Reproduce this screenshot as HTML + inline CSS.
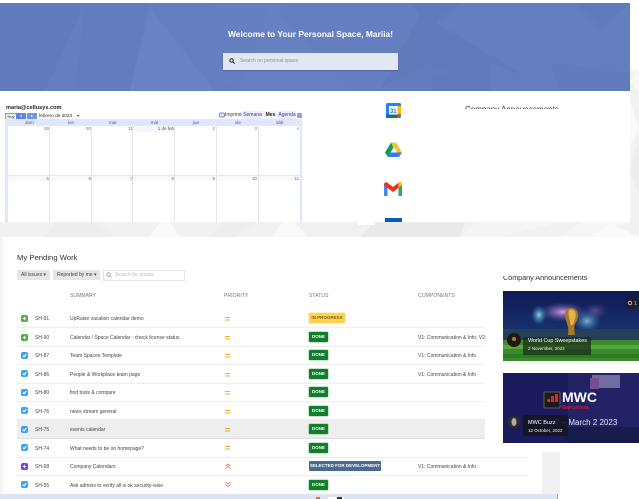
<!DOCTYPE html>
<html><head><meta charset="utf-8">
<style>
html,body{margin:0;padding:0;background:#fff}
body{width:639px;height:499px;position:relative;overflow:hidden;font-family:"Liberation Sans",sans-serif;color:#333}
.a{position:absolute;white-space:nowrap}
.t{font-size:5px;line-height:8px;color:#444}
.h{font-size:5px;line-height:8px;color:#777;letter-spacing:.1px}
.i{position:absolute;left:21px;width:7px;height:7px;border-radius:2px}
.sep{position:absolute;left:17px;height:1px;background:#eeeeee}
.b{position:absolute;left:309px;height:10px;font-size:4.5px;font-weight:bold;line-height:10px;text-align:center;border-radius:1px;color:#fff;background:#0f7f2c;width:19px;box-shadow:0 0 0 .5px #8cc79a}
.d{position:absolute;font-size:4.5px;line-height:6px;color:#777;text-align:right;width:20px}
.p{position:absolute;left:225px;width:5px;height:1px;background:#f6ab1d;box-shadow:0 2.5px 0 #f6ab1d}
</style></head><body>
<!-- page grey bg -->
<svg class="a" style="left:630px;top:70px" width="9" height="152" viewBox="0 0 9 152">
<rect width="9" height="152" fill="#f2f2f2"/>
<polygon points="9,0 0,12 9,22" fill="#f8f8f8"/>
<polygon points="0,30 9,60 0,75" fill="#fafafa"/>
<polygon points="9,70 0,100 9,125" fill="#ededed"/>
</svg>
<!-- banner -->
<svg class="a" style="left:0;top:3px" width="630" height="88" viewBox="0 0 630 88">
<rect width="630" height="88" fill="#657ec0"/>
<polygon points="0,0 85,0 45,88 0,88" fill="#627bbd"/>
<polygon points="150,5 215,88 130,88" fill="#6882c3"/>
<polygon points="85,0 148,0 130,88 75,88" fill="#637cbe"/>
<polygon points="215,0 285,0 240,88 215,75" fill="#657fc1"/>
<polygon points="270,0 350,88 240,88" fill="#6780c2"/>
<polygon points="420,10 520,70 480,88 380,88" fill="#617abc"/>
<polygon points="375,88 430,60 480,88" fill="#637cbe"/>
<polygon points="410,0 460,0 430,25" fill="#607abb"/>
<polygon points="430,75 500,58 520,88 435,88" fill="#607abb"/>
<polygon points="490,60 560,88 490,88" fill="#657ec0"/>
<polygon points="550,60 630,70 630,88 560,88" fill="#617bbc"/>
<polygon points="575,0 630,0 600,25" fill="#607abb"/>
</svg>
<div class="a" style="left:228px;top:28px;font-size:8.45px;line-height:12px;font-weight:bold;color:#fff">Welcome to Your Personal Space, Mariia!</div>
<div class="a" style="left:223px;top:53px;width:175px;height:17px;background:#e3e6f3;box-shadow:0 1px 1px rgba(40,50,100,.35)"></div>
<svg class="a" style="left:229px;top:58px" width="6" height="6" viewBox="0 0 6 6"><circle cx="2.5" cy="2.5" r="1.7" fill="none" stroke="#223" stroke-width="1"/><path d="M4 4L5.6 5.6" stroke="#223" stroke-width="1"/></svg>
<div class="a" style="left:240px;top:58px;font-size:5px;line-height:7px;color:#8d8f9c">Search on personal space</div>

<!-- calendar -->
<div class="a" style="left:6px;top:104px;font-size:5.6px;line-height:8px;font-weight:bold;color:#222">maria@cellusys.com</div>
<div class="a" style="left:5px;top:113px;width:10px;height:5px;border:.5px solid #999;background:#eee;font-size:4px;line-height:5px;text-align:center">Hoy</div>
<div class="a" style="left:16px;top:113px;width:10px;height:6px;background:#5d84ea"></div>
<div class="a" style="left:27px;top:113px;width:10px;height:6px;background:#6f93ee"></div>
<div class="a" style="left:20px;top:114.5px;width:0;height:0;border:1.5px solid transparent;border-right:2px solid #fff;border-left:0"></div>
<div class="a" style="left:31px;top:114.5px;width:0;height:0;border:1.5px solid transparent;border-left:2px solid #fff;border-right:0"></div>
<div class="a" style="left:39px;top:112px;font-size:4.7px;line-height:7px;color:#222">febrero de 2023</div>
<div class="a" style="left:77px;top:115px;width:0;height:0;border:1.5px solid transparent;border-top:2px solid #333"></div>
<svg class="a" style="left:219px;top:112px" width="6" height="6"><rect x=".5" y="1" width="5" height="4" rx="1" fill="#dfe5fb" stroke="#5566bb" stroke-width=".7"/></svg>
<div class="a" style="left:225px;top:112px;font-size:5px;line-height:7px;color:#444">Imprimir</div>
<div class="a" style="left:242px;top:111px;width:21px;height:8px;background:#e9edfd;font-size:5px;line-height:9px;text-align:center;color:#3a3ab0">Semana</div>
<div class="a" style="left:264px;top:111px;width:13px;height:8px;background:#f6f6f6;font-size:5px;font-weight:bold;line-height:9px;text-align:center;color:#222">Mes</div>
<div class="a" style="left:278px;top:111px;width:18px;height:8px;background:#e9edfd;font-size:5px;line-height:9px;text-align:center;color:#3a3ab0">Agenda</div>
<div class="a" style="left:297px;top:113px;width:5px;height:5px;background:#8aa4f0"></div>
<div class="a" style="left:5px;top:119px;width:297px;height:103px;background:#e0e6ff"></div>
<div class="a" style="left:8px;top:126px;width:292px;height:96px;background:#fff"></div>
<div class="a" style="left:133px;top:127px;width:42px;height:5px;background:#f5f6fd"></div>
<div class="a" style="left:8px;top:175px;width:292px;height:1px;background:#e6e6ea"></div>
<div class="a" style="left:8px;top:176px;width:292px;height:5px;background:#f7f8fc"></div>
<div class="a" style="left:49px;top:126px;width:1px;height:96px;background:#e6e6ea"></div>
<div class="a" style="left:91px;top:126px;width:1px;height:96px;background:#e6e6ea"></div>
<div class="a" style="left:132px;top:126px;width:1px;height:96px;background:#e6e6ea"></div>
<div class="a" style="left:174px;top:126px;width:1px;height:96px;background:#e6e6ea"></div>
<div class="a" style="left:216px;top:126px;width:1px;height:96px;background:#e6e6ea"></div>
<div class="a" style="left:258px;top:126px;width:1px;height:96px;background:#e6e6ea"></div>
<div class="a" style="left:8px;top:120px;width:292px;height:6px;font-size:4.5px;line-height:6px;color:#4a4ac0">
<span class="a" style="left:17px">dom</span><span class="a" style="left:60px">lun</span><span class="a" style="left:101px">mar</span><span class="a" style="left:143px">mié</span><span class="a" style="left:185px">jue</span><span class="a" style="left:227px">vie</span><span class="a" style="left:268px">sáb</span></div>
<div class="d" style="left:29px;top:126px">29</div><div class="d" style="left:71px;top:126px">30</div><div class="d" style="left:113px;top:126px">31</div><div class="d" style="left:154px;top:126px;width:20px;color:#555">1 de feb</div><div class="d" style="left:195px;top:126px">2</div><div class="d" style="left:237px;top:126px">3</div><div class="d" style="left:279px;top:126px">4</div>
<div class="d" style="left:29px;top:176px">5</div><div class="d" style="left:71px;top:176px">6</div><div class="d" style="left:113px;top:176px">7</div><div class="d" style="left:154px;top:176px">8</div><div class="d" style="left:195px;top:176px">9</div><div class="d" style="left:237px;top:176px">10</div><div class="d" style="left:279px;top:176px">11</div>

<!-- app icons -->
<svg class="a" style="left:386px;top:103px" width="15" height="15" viewBox="0 0 15 15"><rect width="15" height="15" rx="1.5" fill="#1e88e5"/><rect x="11" y="3" width="4" height="9" fill="#fbbc04"/><rect y="11" width="12" height="4" fill="#188038"/><rect y="11" width="3" height="4" fill="#1967d2"/><polygon points="11,15 15,11 11,11" fill="#ea4335"/><rect x="3" y="3" width="8.5" height="8.5" fill="#fff"/><text x="7.3" y="10" font-size="6" font-weight="bold" text-anchor="middle" fill="#1a73e8" font-family="Liberation Sans">31</text></svg>
<svg class="a" style="left:385px;top:142px" width="17" height="16" viewBox="0 0 17 16"><polygon points="6,0.5 11,0.5 17,10.5 12,10.500" fill="#fbc02d"/><polygon points="3,15 14,15 17,10.500 5.500,10.500" fill="#3b7bf0"/><polygon points="6,0.500 8.500,5.500 3,15 0,10.500" fill="#0f9d58"/></svg>
<svg class="a" style="left:384px;top:182px" width="18" height="14" viewBox="0 0 18 14"><path d="M0 3v11h3.500V5z" fill="#4285f4"/><path d="M18 3v11h-3.500V5z" fill="#34a853"/><path d="M0 2.500C0 .5 2 -.5 3.500 .8L9 5l5.500-4.200C16 -.5 18 .5 18 2.500v.5l-3.500 3L9 10 3.500 6 0 3z" fill="#ea3323"/><path d="M14.500 .8C16 -.5 18 .5 18 2.500V3l-3.500 3z" fill="#fbbc04"/></svg>
<div class="a" style="left:385px;top:218px;width:17px;height:5px;background:#0d5ab8"></div>
<div class="a" style="left:465px;top:105px;height:4px;overflow:hidden;width:100px"><div style="font-size:8px;line-height:10px;color:#333;white-space:nowrap">Company Announcements</div></div>

<!-- grey strip -->
<svg class="a" style="left:0;top:222px" width="639" height="15" viewBox="0 0 639 15">
<rect width="639" height="15" fill="#f1f1f1"/>
<polygon points="45,15 55,0 95,0 115,15" fill="#ededed"/>
<polygon points="150,15 160,0 170,0 180,15" fill="#fafafa"/>
<polygon points="210,15 225,0 255,0 235,15" fill="#ededed"/>
<polygon points="272,15 282,0 295,0 308,15" fill="#f9f9f9"/>
<polygon points="360,15 375,0 465,0 460,15" fill="#e9e9e9"/>
<polygon points="460,15 475,0 560,0 500,15" fill="#f5f5f5"/>
<polygon points="560,15 580,0 630,0 590,15" fill="#f6f6f6"/>
<polygon points="590,15 610,2 639,15" fill="#fafafa"/>
<rect x="358" y="0" width="17" height="3" fill="#fff"/>
</svg>

<!-- lower panel -->
<div class="a" style="left:3px;top:237px;width:636px;height:262px;background:#fff"></div>
<div class="a" style="left:0;top:237px;width:3px;height:262px;background:#f5f5f5"></div>
<div class="a" style="left:17px;top:252px;font-size:7.7px;line-height:11px;color:#333">My Pending Work</div>
<div class="a" style="left:17px;top:270px;width:33px;height:10px;background:#e6e6e6;border-radius:1px;font-size:5px;line-height:10px;color:#444;text-indent:4px">All issues ▾</div>
<div class="a" style="left:53px;top:270px;width:47px;height:10px;background:#e6e6e6;border-radius:1px;font-size:5px;line-height:10px;color:#444;text-indent:4px">Reported by me ▾</div>
<div class="a" style="left:103px;top:270px;width:80px;height:9px;border:1px solid #e3e3e3;border-radius:1px;font-size:5px;line-height:9px;color:#bbb;text-indent:11px">Search for Issues</div>
<svg class="a" style="left:106px;top:272px" width="6" height="6"><circle cx="2.500" cy="2.500" r="1.700" fill="none" stroke="#999" stroke-width=".8"/><path d="M4 4L5.500 5.500" stroke="#999" stroke-width=".8"/></svg>

<div class="a h" style="left:70px;top:292px">SUMMARY</div>
<div class="a h" style="left:224px;top:292px">PRIORITY</div>
<div class="a h" style="left:309px;top:292px">STATUS</div>
<div class="a h" style="left:418px;top:292px">COMPONENTS</div>

<div class="a" style="left:17px;top:420px;width:468px;height:18px;background:#eeeeee"></div>
<div class="sep" style="top:327px;width:468px"></div><div class="sep" style="top:346px;width:468px"></div><div class="sep" style="top:364px;width:468px"></div><div class="sep" style="top:383px;width:468px"></div><div class="sep" style="top:401px;width:468px"></div><div class="sep" style="top:419px;width:468px"></div><div class="sep" style="top:438px;width:468px;background:#ddd"></div><div class="sep" style="top:457px;width:510px"></div><div class="sep" style="top:475px;width:510px"></div>

<!-- row icons -->
<div class="i" style="top:315px;background:#4caf3f"></div><div class="i" style="top:334px;background:#4caf3f"></div>
<div class="i" style="top:352px;background:#3ea2ee"></div><div class="i" style="top:370px;background:#3ea2ee"></div><div class="i" style="top:389px;background:#3ea2ee"></div><div class="i" style="top:407px;background:#3ea2ee"></div><div class="i" style="top:426px;background:#3ea2ee"></div><div class="i" style="top:444px;background:#3ea2ee"></div>
<div class="i" style="top:463px;background:#7b3fe0"></div><div class="i" style="top:481px;background:#3ea2ee"></div>
<svg class="a" style="left:21px;top:315px" width="7" height="175" viewBox="0 0 7 175" fill="none" stroke="#fff" stroke-width="1.100"><path d="M3.500 1.800v3.400M1.800 3.500h3.400M3.500 20.800v3.400M1.800 22.500h3.400M3.500 149.800v3.400M1.800 151.500h3.400"/><path d="M1.800 40.500l1.300 1.300 2.200-2.700M1.800 58.500l1.300 1.300 2.200-2.700M1.800 77.500l1.300 1.300 2.200-2.700M1.800 95.500l1.300 1.300 2.200-2.700M1.800 114.500l1.300 1.300 2.200-2.700M1.800 132.500l1.300 1.300 2.200-2.700M1.800 169.500l1.300 1.300 2.200-2.700"/></svg>

<div class="a t" style="left:35px;top:315px">SH-91</div><div class="a t" style="left:70px;top:315px">UpRaise vacation calendar demo</div><div class="p" style="top:317px"></div>
<div class="a t" style="left:35px;top:334px">SH-90</div><div class="a t" style="left:70px;top:334px">Calendar / Space Calendar - check license status</div><div class="p" style="top:336px"></div>
<div class="a t" style="left:35px;top:352px">SH-87</div><div class="a t" style="left:70px;top:352px">Team Spaces Template</div><div class="p" style="top:354px"></div>
<div class="a t" style="left:35px;top:371px">SH-86</div><div class="a t" style="left:70px;top:371px">People &amp; Workplace team page</div><div class="p" style="top:373px"></div>
<div class="a t" style="left:35px;top:389px">SH-80</div><div class="a t" style="left:70px;top:389px">find tools &amp; compare</div><div class="p" style="top:391px"></div>
<div class="a t" style="left:35px;top:408px">SH-76</div><div class="a t" style="left:70px;top:408px">news stream general</div><div class="p" style="top:410px"></div>
<div class="a t" style="left:35px;top:426px">SH-75</div><div class="a t" style="left:70px;top:426px">events calendar</div><div class="p" style="top:428px"></div>
<div class="a t" style="left:35px;top:445px">SH-74</div><div class="a t" style="left:70px;top:445px">What needs to be on homepage?</div><div class="p" style="top:446px"></div>
<div class="a t" style="left:35px;top:463px">SH-68</div><div class="a t" style="left:70px;top:463px">Company Calendars</div>
<div class="a t" style="left:35px;top:482px">SH-55</div><div class="a t" style="left:70px;top:482px">Ask admins to verify all is ok security-wise</div>
<svg class="a" style="left:225px;top:463px" width="6" height="6" viewBox="0 0 6 6" fill="none" stroke="#f15b3b" stroke-width=".8"><path d="M.5 3L3 1l2.500 2M.5 5.500L3 3.500l2.500 2"/></svg>
<svg class="a" style="left:225px;top:481px" width="6" height="6" viewBox="0 0 6 6" fill="none" stroke="#f15b3b" stroke-width=".8"><path d="M.5 1L3 3l2.500-2M.5 3.500L3 5.500l2.500-2"/></svg>

<div class="b" style="top:313px;width:36px;background:#ffd24d;color:#7a6420;box-shadow:0 0 0 .5px #ffe596">IN PROGRESS</div>
<div class="b" style="top:332px">DONE</div><div class="b" style="top:350px">DONE</div><div class="b" style="top:369px">DONE</div><div class="b" style="top:387px">DONE</div><div class="b" style="top:406px">DONE</div><div class="b" style="top:424px">DONE</div><div class="b" style="top:443px">DONE</div>
<div class="b" style="top:461px;width:72px;background:#4a6a90;box-shadow:none">SELECTED FOR DEVELOPMENT</div>
<div class="b" style="top:480px">DONE</div>

<div class="a t" style="left:418px;top:334px;width:68px;overflow:hidden">V1: Communication &amp; Info, V2:</div>
<div class="a t" style="left:418px;top:352px">V1: Communication &amp; Info</div>
<div class="a t" style="left:418px;top:371px">V1: Communication &amp; Info</div>
<div class="a t" style="left:418px;top:463px">V1: Communication &amp; Info</div>

<!-- right column -->
<div class="a" style="left:503px;top:276px;height:6px;overflow:hidden;width:100px"><div style="margin-top:-2px;font-size:7.2px;line-height:8px;color:#333;white-space:nowrap">Company Announcements</div></div>
<svg class="a" style="left:503px;top:291px" width="136" height="70" viewBox="0 0 136 70">
<defs><linearGradient id="sky" x1="0" x2="0" y1="0" y2="1"><stop offset="0" stop-color="#0f1a55"/><stop offset=".55" stop-color="#16306c"/><stop offset="1" stop-color="#0f2a52"/></linearGradient>
<radialGradient id="fw"><stop offset="0" stop-color="#d8a0dc"/><stop offset="1" stop-color="#5a4aa0" stop-opacity="0"/></radialGradient>
<radialGradient id="fw2"><stop offset="0" stop-color="#8fd0e4"/><stop offset="1" stop-color="#3a80b0" stop-opacity="0"/></radialGradient></defs>
<rect width="136" height="70" fill="url(#sky)"/>
<ellipse cx="60" cy="21" rx="24" ry="10" fill="url(#fw)"/><ellipse cx="36" cy="24" rx="8" ry="10" fill="url(#fw2)"/><ellipse cx="84" cy="30" rx="14" ry="11" fill="url(#fw2)" opacity=".8"/><ellipse cx="92" cy="20" rx="14" ry="9" fill="url(#fw)" opacity=".35"/>
<rect y="38" width="136" height="11" fill="#25405a"/>
<rect y="49" width="136" height="21" fill="#3b8a2c"/>
<rect y="54" width="136" height="4" fill="#56a83a"/><rect y="63" width="136" height="4" fill="#2d7a24"/>
<path d="M62 23c0-4 3-6 6.500-6s6.500 3 6.500 7c0 5-2.500 7-3.500 11-.5 3 0 6 .5 9h-7c.5-3 .5-6-.5-10C63 30 62 27 62 23z" fill="#a97a24"/>
<path d="M66 19c3-1 5.500 0 6.500 3s-1 7-2.500 12h-2.500c0-5-3-9-1.500-15z" fill="#e3b54c"/>
<rect x="20" y="46" width="68" height="18" fill="#1c2a18" opacity=".72"/>
<circle cx="11" cy="49" r="7" fill="#221a10"/><circle cx="11" cy="48" r="2" fill="#a8802c"/>
<text x="25" y="51" font-family="Liberation Sans" font-size="5.400" fill="#fff">World Cup Sweepstakes</text>
<text x="25" y="59" font-family="Liberation Sans" font-size="4.500" fill="#eee">2 November, 2022</text>
<rect x="122" y="6" width="14" height="12" rx="5" fill="#1c1c2c"/><circle cx="127" cy="12" r="1.800" fill="none" stroke="#ddd" stroke-width=".8"/><text x="131" y="14" font-family="Liberation Sans" font-size="5" fill="#ddd">1</text>
</svg>
<svg class="a" style="left:503px;top:373px" width="136" height="70" viewBox="0 0 136 70">
<rect width="136" height="70" fill="#1b1a5c"/>
<rect x="65" y="0" width="71" height="70" fill="#25266a" opacity=".7"/>
<rect x="89" y="2" width="28" height="13" fill="#6e6fa0"/><rect x="87" y="5" width="9" height="11" fill="#7c4c92"/>
<rect x="60" y="54" width="76" height="16" fill="#181c4c"/>
<rect x="41" y="19" width="16" height="16" fill="#1a1a1a" stroke="#999" stroke-width=".5"/>
<rect x="52" y="21" width="3" height="8" fill="#e0202a"/><rect x="48" y="23" width="3" height="6" fill="#e0202a"/><rect x="44" y="26" width="3" height="3" fill="#e0202a"/>
<text x="59" y="29" font-family="Liberation Sans" font-size="14" font-weight="bold" fill="#fff">MWC</text>
<text x="59" y="36" font-family="Liberation Sans" font-size="5.500" fill="#d01c38" font-weight="bold">Barcelona</text>
<text x="52" y="52" font-family="Liberation Sans" font-size="8" fill="#e6e6f4">7 – March 2 2023</text>
<rect x="20" y="42" width="45" height="21" fill="#15151f" opacity=".88"/>
<circle cx="11" cy="49" r="6.500" fill="#2c2c2c"/><ellipse cx="11" cy="49" rx="2.500" ry="4" fill="#b5a8a0"/>
<text x="25" y="51" font-family="Liberation Sans" font-size="5.500" fill="#fff">MWC Buzz</text>
<text x="25" y="59" font-family="Liberation Sans" font-size="4.500" fill="#eee">12 October, 2022</text>
</svg>
<div class="a" style="left:542px;top:452px;width:18px;height:42px;background:#f1f1f1"></div>

<!-- bottom strip -->
<div class="a" style="left:0;top:494px;width:557px;height:5px;background:#dbe4f4"></div>
<div class="a" style="left:557px;top:494px;width:1px;height:5px;background:#aaa"></div>
<div class="a" style="left:316px;top:497px;width:4px;height:2px;background:#d9743a"></div>
<div class="a" style="left:328px;top:497px;width:16px;height:2px;background:#fff"></div>
<div class="a" style="left:337px;top:497px;width:5px;height:2px;background:#334"></div>
</body></html>
